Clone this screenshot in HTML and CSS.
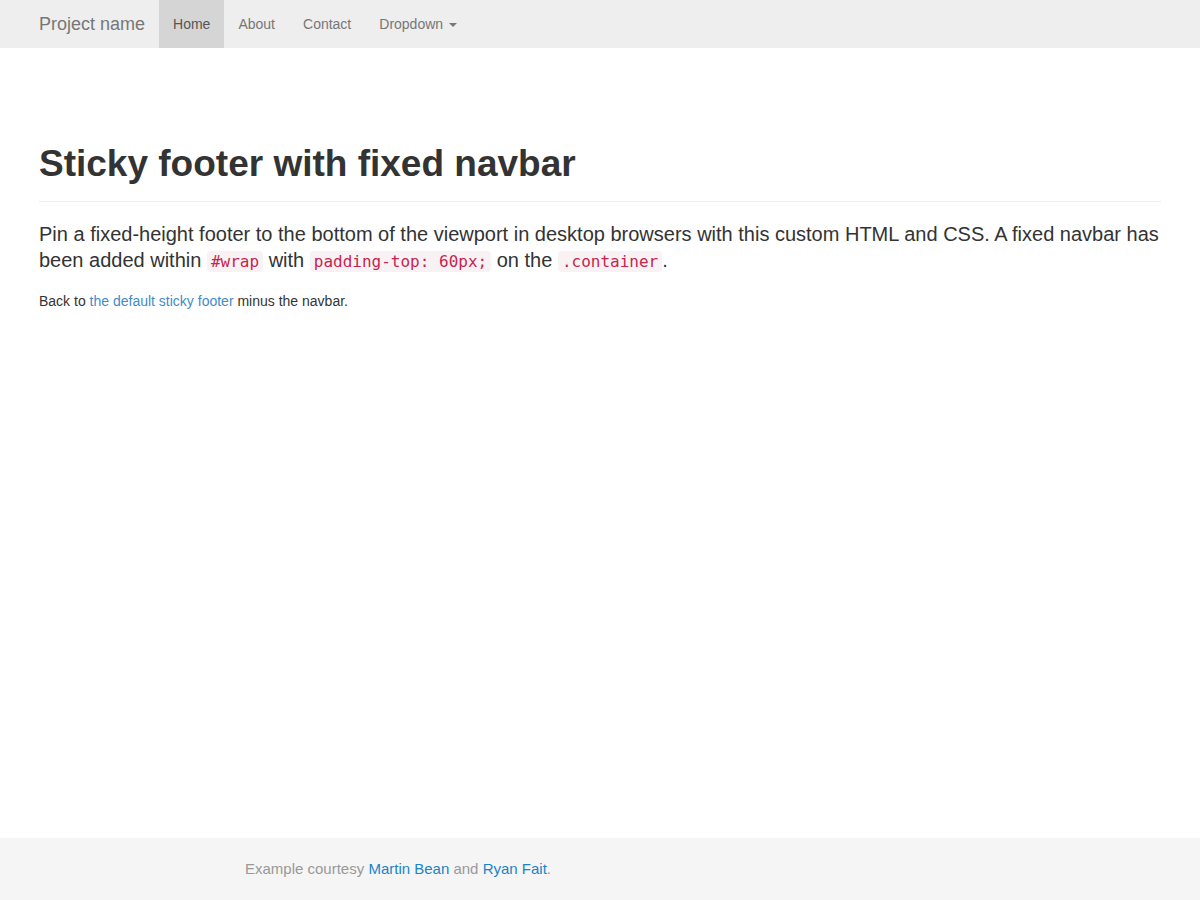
FILE: index.html
```html
<!DOCTYPE html>
<html lang="en">
<head>
<meta charset="utf-8">
<title>Sticky footer with fixed navbar</title>
<link rel="stylesheet" href="styles.css">
</head>
<body>
<div class="wrap">
  <nav class="navbar">
    <a class="brand" href="#">Project name</a>
    <ul class="nav">
      <li class="active"><a href="#">Home</a></li>
      <li><a href="#">About</a></li>
      <li><a href="#">Contact</a></li>
      <li><a href="#">Dropdown <span class="caret"></span></a></li>
    </ul>
  </nav>
  <main class="container">
    <div class="page-header">
      <h1>Sticky footer with fixed navbar</h1>
    </div>
    <p class="lead">Pin a fixed-height footer to the bottom of the viewport in desktop browsers with this custom HTML and CSS. A fixed navbar has been added within <code>#wrap</code> with <code>padding-top: 60px;</code> on the <code>.container</code>.</p>
    <p class="back">Back to <a href="#">the default sticky footer</a> minus the navbar.</p>
  </main>
</div>
<footer class="footer">
  <p class="credit">Example courtesy <a href="#">Martin Bean</a> and <a href="#">Ryan Fait</a>.</p>
</footer>
</body>
</html>
```

FILE: styles.css
```css
html, body {
  margin: 0;
  padding: 0;
  height: 100%;
}
body {
  font-family: "Liberation Sans", Arial, sans-serif;
  font-size: 14px;
  line-height: 1.428;
  color: #333;
  background: #fff;
  display: flex;
  flex-direction: column;
}
a {
  text-decoration: none;
}
.wrap {
  flex: 1 0 auto;
}
.navbar {
  display: flex;
  align-items: stretch;
  height: 48px;
  background: #eeeeee;
  padding: 0 39px;
}
.brand {
  display: flex;
  align-items: center;
  padding-top: 2px;
  font-size: 18px;
  color: #777;
  margin-right: 14px;
}
.nav {
  display: flex;
  list-style: none;
  margin: 0;
  padding: 0;
}
.nav li a {
  display: flex;
  align-items: center;
  height: 100%;
  box-sizing: border-box;
  padding: 2px 14px 0;
  color: #777;
  font-size: 14px;
}
.nav li.active a {
  background: #d5d5d5;
  color: #555;
}
.caret {
  display: inline-block;
  width: 0;
  height: 0;
  margin-left: 6px;
  border-top: 4px solid #777;
  border-left: 4px solid transparent;
  border-right: 4px solid transparent;
}
.container {
  padding: 96px 39px 0;
}
.page-header {
  padding-bottom: 6px;
  border-bottom: 1px solid #eee;
  margin-bottom: 19px;
}
h1 {
  margin: 0 0 10px;
  font-size: 37px;
  font-weight: 700;
  line-height: 1.1;
  color: #333;
}
.lead {
  font-size: 20px;
  font-weight: 300;
  line-height: 1.3;
  margin: 0 0 19px;
}
code {
  font-family: "DejaVu Sans Mono", monospace;
  font-size: 16px;
  padding: 1px 4px;
  color: #c7254e;
  background: #f9f2f4;
  border-radius: 4px;
}
.back {
  margin: 0;
}
.back a {
  color: #428bca;
}
.footer {
  flex: 0 0 62px;
  background: #f5f5f5;
  display: flex;
  align-items: center;
  padding-left: 245px;
}
.credit {
  margin: 0;
  font-size: 15px;
  color: #999;
}
.credit a {
  color: #1a84c6;
}
```
